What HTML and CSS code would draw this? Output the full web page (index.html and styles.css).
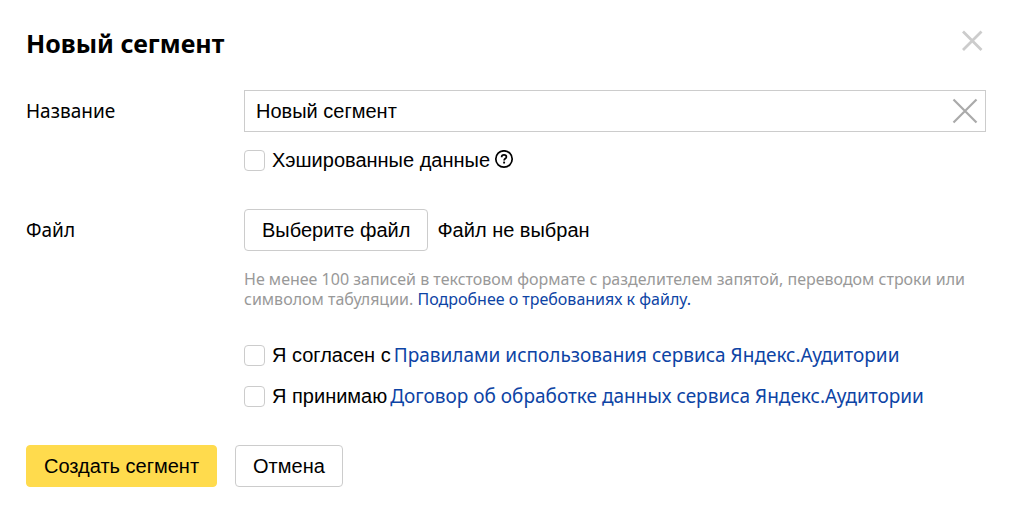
FILE: index.html
```html
<!DOCTYPE html>
<html lang="ru">
<head>
    <meta charset="UTF-8">
    <meta name="viewport" content="width=device-width, initial-scale=1.0">
    <title>Новый сегмент</title>
    <link rel="stylesheet" href="styles.css">
</head>
<body>

<form class="dialog">
    <div class="header">
        <h1>Новый сегмент</h1>
        <button type="button" class="icon-button" aria-label="Закрыть">
            <svg width="28" height="34" viewBox="0 0 28 34"><path d="M5 5.5 L23.5 24 M23.5 5.5 L5 24" stroke="#cccccc" stroke-width="2.8"/></svg>
        </button>
    </div>

    <div class="row">
        <label class="row-label" for="name">Название</label>
        <div class="row-content">
            <div class="text-field">
                <input type="text" id="name" value="Новый сегмент">
                <button type="button" class="icon-button" aria-label="Очистить">
                    <svg width="40" height="40" viewBox="0 0 40 40"><path d="M8.5 8.5 L31.5 31.5 M31.5 8.5 L8.5 31.5" stroke="#aaaaaa" stroke-width="2.2"/></svg>
                </button>
            </div>
            <div class="check">
                <input type="checkbox" id="hashed">
                <label for="hashed">Хэшированные данные</label>
                <button type="button" class="icon-button help" aria-label="Справка">
                    <svg width="20" height="20" viewBox="0 0 20 20" fill="none" stroke="#000000">
                        <circle cx="10" cy="9" r="8.2" stroke-width="1.7"/>
                        <path d="M7.6 7.2 C7.6 5.6 8.6 4.9 10 4.9 C11.4 4.9 12.4 5.7 12.4 6.9 C12.4 8.5 10.1 8.6 10.1 10.4" stroke-width="1.7"/>
                        <path d="M10.1 11.6 V13.5" stroke-width="1.9"/>
                    </svg>
                </button>
            </div>
        </div>
    </div>

    <div class="row">
        <label class="row-label" for="choose">Файл</label>
        <div class="row-content">
            <div class="file">
                <button type="button" class="button" id="choose" onclick="document.getElementById('file').click()">Выберите файл</button>
                <input type="file" id="file" hidden>
                <span>Файл не выбран</span>
            </div>
            <p class="hint">Не менее 100 записей в текстовом формате с разделителем запятой, переводом строки или символом табуляции. <a href="#">Подробнее о требованиях к файлу.</a></p>
            <div class="check">
                <input type="checkbox" id="rules">
                <label for="rules">Я согласен с</label>
                <a href="#">Правилами использования сервиса Яндекс.Аудитории</a>
            </div>
            <div class="check">
                <input type="checkbox" id="contract">
                <label for="contract">Я принимаю</label>
                <a href="#">Договор об обработке данных сервиса Яндекс.Аудитории</a>
            </div>
        </div>
    </div>

    <div class="actions">
        <button type="submit" class="button primary">Создать сегмент</button>
        <button type="button" class="button">Отмена</button>
    </div>
</form>

</body>
</html>
```
FILE: styles.css
```css
* {
    margin: 0;
    padding: 0;
    box-sizing: border-box;
}

body {
    font-family: 'Liberation Sans', Arial, sans-serif;
    font-size: 20px;
    line-height: 24px;
    background-color: #ffffff;
    color: #000000;
}

.dialog {
    padding: 26px 27px 26px 26px;
}

.header {
    display: flex;
    justify-content: space-between;
    align-items: center;
    margin-bottom: 30px;
}

h1 {
    font-family: 'Noto Sans', sans-serif;
    font-size: 25px;
    font-weight: bold;
    line-height: 34px;
}

.icon-button {
    display: block;
    border: none;
    background: none;
    cursor: pointer;
}

.icon-button svg {
    display: block;
}

.row {
    display: flex;
    margin-bottom: 37px;
}

.row-label {
    flex: 0 0 218px;
    font-family: 'Noto Sans', sans-serif;
    font-size: 19px;
    line-height: 42px;
}

.row-content {
    flex: 1;
}

.text-field {
    display: flex;
    height: 42px;
    margin-bottom: 16px;
    border: 1px solid #cccccc;
}

.text-field input {
    flex: 1;
    min-width: 0;
    padding-left: 11px;
    border: none;
    outline: none;
    font: inherit;
}

.check {
    display: flex;
    align-items: center;
    margin-bottom: 17px;
}

.check:last-child {
    margin-bottom: 0;
}

.check input {
    appearance: none;
    width: 21px;
    height: 21px;
    margin-right: 7px;
    border: 1px solid #cccccc;
    border-radius: 4px;
}

.check input:checked {
    background-color: #ffdb4d;
}

.check a {
    margin-left: 3px;
    font-family: 'Noto Sans', sans-serif;
    font-size: 19px;
}

.help {
    margin-left: 4px;
}

a {
    color: #0d44a5;
    text-decoration: none;
}

.file {
    display: flex;
    align-items: center;
    gap: 9px;
    margin-bottom: 18px;
}

.button {
    height: 42px;
    padding: 0 17px;
    border: 1px solid #cccccc;
    border-radius: 4px;
    background-color: #ffffff;
    color: #000000;
    font: inherit;
    cursor: pointer;
}

.primary {
    border-color: #ffdb4d;
    background-color: #ffdb4d;
}

.hint {
    margin-bottom: 34px;
    font-family: 'Noto Sans', sans-serif;
    font-size: 16px;
    line-height: 20px;
    color: #999999;
}

.actions {
    display: flex;
    gap: 18px;
}
```
